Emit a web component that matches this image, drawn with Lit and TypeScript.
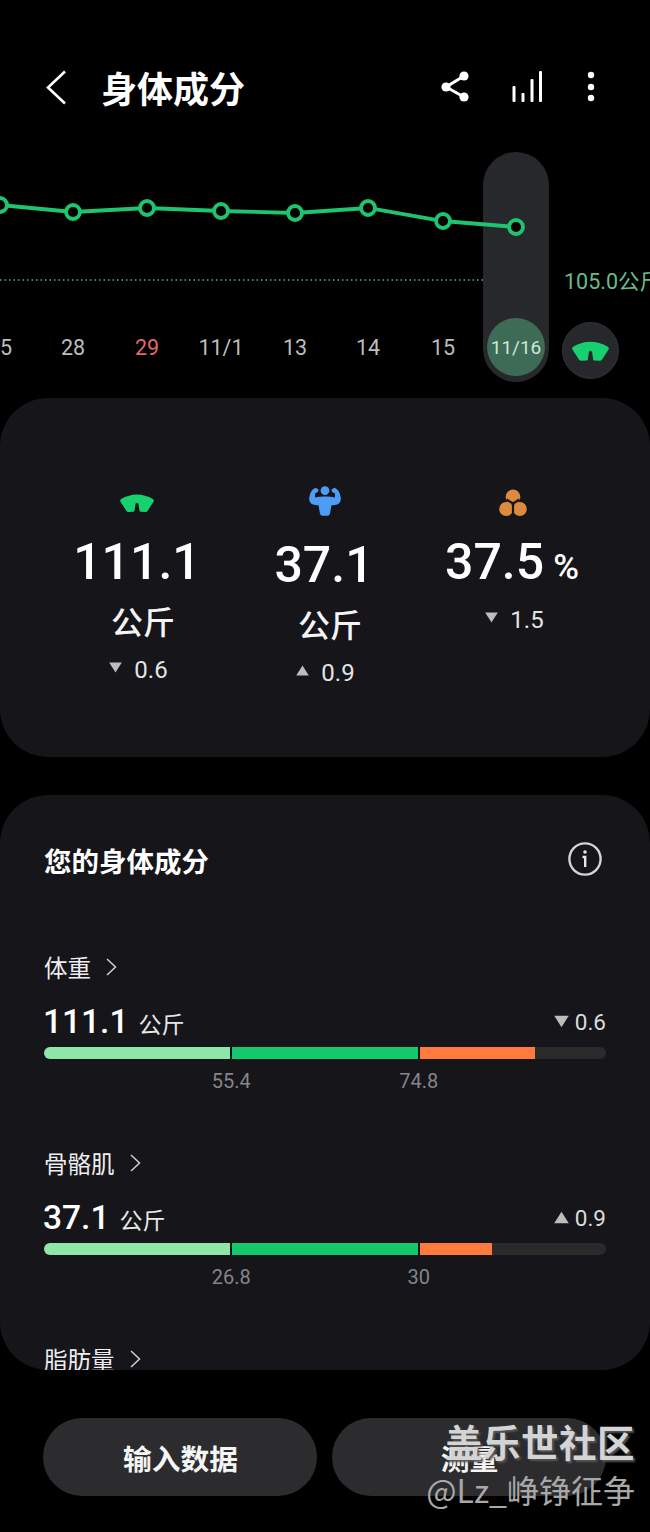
import { LitElement, html, css, svg } from "lit";
import { customElement } from "lit/decorators.js";

const POINTS: [number, number][] = [[0,205],[73,212],[147,208],[221,211],[295,213],[368,208],[443,221],[516,227]];
const DATES: {x:number;t:string;red?:boolean}[] = [
  {x:0,t:"25"},{x:73,t:"28"},{x:147,t:"29",red:true},{x:221,t:"11/1"},{x:295,t:"13"},{x:368,t:"14"},{x:443,t:"15"},
];

const fan = (w: number, h: number, c: string) => html`<svg width=${w} height=${h} viewBox="0 0 34 18"><path fill=${c} d="M1 5Q17 -4 33 5L34 7L27.5 17Q27 18 25.5 18L20.5 17.8Q19.5 17.6 19.4 16.5L18.4 9.5Q17 8.5 15.6 9.5L14.6 16.5Q14.5 17.6 13.5 17.8L8.5 18Q7 18 6.5 17L0 7Z"/></svg>`;
const tri = (up: boolean) => html`<svg class="tri" width="13" height="11" viewBox="0 0 13 11"><path fill="#bdbdc0" d=${up ? "M6.5 0.5L12.8 10.5H0.2Z" : "M0.2 0.5H12.8L6.5 10.5Z"}/></svg>`;
const chev = html`<svg class="chev" width="11" height="18" viewBox="0 0 11 18"><path d="M1 1L9.5 9L1 17" fill="none" stroke="#d0d0d0" stroke-width="1.5"/></svg>`;

@customElement("app-root")
export class AppRoot extends LitElement {
  static styles = css`
    :host { display: block; width: 650px; height: 1532px; background: #000; color: #fff; overflow: hidden; position: relative;
      font-family: Roboto, "Noto Sans CJK SC", sans-serif; }
    .header { height: 150px; box-sizing: border-box; padding: 70px 0 0 46px; display: flex; align-items: flex-start; }
    .back { display: block; }
    .title { margin: -3px 0 0 33px; font-size: 36px; line-height: 40px; font-weight: 700; font-family: "Noto Sans CJK SC", sans-serif; flex: 1; }
    .tools { display: block; margin: 0; position: absolute; left: 435px; top: 66px; }
    .chart { position: relative; height: 248px; overflow: hidden; }
    .pill { position: absolute; left: 483px; top: 2px; width: 66px; height: 230px; border-radius: 33px; background: #27282b; }
    .plot { position: absolute; left: 0; top: 0; }
    .date { position: absolute; top: 185px; width: 60px; margin-left: -30px; text-align: center; font-size: 21.5px; line-height: 26px; color: #bdbdbd; }
    .date.red { color: #e0686c; }
    .today { position: absolute; left: 487px; top: 168px; width: 58px; height: 58px; border-radius: 50%; background: #3e6b56;
      display: flex; align-items: center; justify-content: center; font-size: 19px; color: #cfe6d9; }
    .goal { position: absolute; left: 564px; top: 119px; font-size: 21.5px; line-height: 26px; color: #69bb88; white-space: nowrap; }
    .scale { position: absolute; left: 562px; top: 172px; width: 57px; height: 57px; box-sizing: border-box; border-radius: 50%;
      background: #27282b; border: 1px solid #333437; display: flex; align-items: center; justify-content: center; }
    .card { background: #15151a; border-radius: 48px; }
    .summary { height: 359px; box-sizing: border-box; padding: 90px 43px 0; display: grid; grid-template-columns: 188px 186px 188px; margin-bottom: 38px; }
    .col { display: flex; flex-direction: column; align-items: center; }
    .col.low .icon { margin-top: -2px; margin-left: 2px; }
    .col.low .num { margin-top: 20px; }
    .col.fat .icon { padding-left: 3px; }
    .icon { height: 30px; display: flex; align-items: center; justify-content: center; }
    .num { margin-top: 15px; font-size: 50px; line-height: 58px; font-weight: 500; white-space: nowrap; }
    .num small { font-size: 35px; margin-left: 9px; font-weight: 500; }
    .col.fat .num small { margin-right: -2px; }
    .unit { margin-top: 9px; font-size: 32px; line-height: 40px; font-weight: 500; font-family: "Noto Sans CJK SC", sans-serif; color: #f4f4f4; padding-left: 12px; }
    .delta { display: flex; align-items: center; gap: 12px; font-size: 24px; line-height: 30px; color: #e4e4e4; margin-top: 15px; padding-left: 3px; }
    .delta.pct { margin-top: 8px; padding-left: 7px; }
    .tri { display: block; margin-top: -5px; }
    .detail { height: 575px; box-sizing: border-box; overflow: hidden; padding: 46px 44px 0; margin-bottom: 48px; }
    .dhead { display: flex; justify-content: space-between; align-items: center; height: 38px; margin-bottom: 72px; }
    .dhead h2 { margin: 0; font-size: 27.5px; line-height: 38px; font-weight: 700; font-family: "Noto Sans CJK SC", sans-serif; }
    .info { display: block; margin: -2px 3px 0 0; }
    .metric { height: 196px; }
    .name { display: flex; align-items: center; gap: 15px; font-size: 23.5px; line-height: 32px; font-family: "Noto Sans CJK SC", sans-serif; color: #eee; }
    .chev { display: block; }
    .vals { display: flex; justify-content: space-between; align-items: center; height: 40px; margin-top: 19px; }
    .val { font-size: 33.5px; line-height: 40px; font-weight: 500; display: flex; align-items: baseline; gap: 10px; margin-left: -1px; }
    .val span { font-size: 23px; font-weight: 400; font-family: "Noto Sans CJK SC", sans-serif; color: #e8e8e8; }
    .chg { display: flex; align-items: center; gap: 6px; font-size: 22.5px; color: #dcdcdc; }
    .chg .tri { width: 15px; height: 13px; margin-top: -2px; }
    .bar { height: 12px; margin-top: 5px; border-radius: 6px; background: #2a2a2b; overflow: hidden; display: flex; }
    .seg { height: 100%; box-sizing: border-box; border-right: 2px solid #15151a; }
    .seg.last { border-right: none; }
    .a { background: #8ee6ab; }
    .b { background: #14c96b; }
    .c { background: #ff7a3c; }
    .marks { display: grid; grid-template-columns: 1fr 2fr 2fr 1fr; margin-top: 9px; font-size: 20px; line-height: 26px; color: #85858a; }
    .marks span { text-align: center; }
    .marks span:first-child { grid-column: 2; }
    .actions { display: flex; gap: 15px; padding: 0 44px 0 43px; }
    .btn { flex: 1; height: 78px; border-radius: 39px; background: #2c2c2f; display: flex; align-items: center; justify-content: center;
      font-size: 28.75px; font-weight: 700; font-family: "Noto Sans CJK SC", sans-serif; color: #f5f5f5; padding-left: 1px; }
    .mark { position: absolute; right: 15px; top: 1418px; display: flex; flex-direction: column; align-items: flex-end; font-family: "Noto Sans CJK SC", sans-serif; }
    .mark b { font-size: 37.5px; line-height: 46px; font-weight: 700; color: #d4d4d4; text-shadow: 2px 2px 2px #555; letter-spacing: 0.5px; }
    .mark i { font-style: normal; font-size: 32px; line-height: 40px; color: #a8a8a8; margin-top: 5px; white-space: nowrap; }
  `;

  private metric(name: string, v: string, up: boolean, d: string, w3: number, m1: string, m2: string) {
    return html`<div class="metric">
      <div class="name">${name}${chev}</div>
      <div class="vals">
        <div class="val">${v}<span>公斤</span></div>
        <div class="chg">${tri(up)}${d}</div>
      </div>
      <div class="bar">
        <div class="seg a" style="width:188px"></div>
        <div class="seg b" style="width:188px"></div>
        <div class="seg c last" style="width:${w3}px"></div>
      </div>
      <div class="marks"><span>${m1}</span><span>${m2}</span></div>
    </div>`;
  }

  render() {
    const pts = POINTS.map(p => `${p[0]},${p[1] - 150}`).join(" ");
    return html`
      <div class="header">
        <svg class="back" width="22" height="36" viewBox="0 0 22 36"><path d="M19 1.5L2 17.5L19 33.5" fill="none" stroke="#fff" stroke-width="2.6"/></svg>
        <div class="title">身体成分</div>
        <svg class="tools" width="170" height="40" viewBox="0 0 170 40" fill="#fff">
          <g stroke="#fff" stroke-width="3" fill="none"><path d="M29 10L11 21L29 31"/></g>
          <circle cx="29" cy="10" r="4.6"/><circle cx="11" cy="21" r="4.6"/><circle cx="29" cy="31" r="4.6"/>
          <rect x="77.5" y="20" width="3" height="16" rx="1"/><rect x="86.5" y="27" width="3" height="9" rx="1"/>
          <rect x="95.5" y="13" width="3" height="23" rx="1"/><rect x="104" y="5" width="3" height="31" rx="1"/>
          <circle cx="156" cy="9" r="3.2"/><circle cx="156" cy="21" r="3.2"/><circle cx="156" cy="32" r="3.2"/>
        </svg>
      </div>

      <div class="chart">
        <div class="pill"></div>
        <svg class="plot" width="650" height="248" viewBox="0 0 650 248">
          <line x1="0" y1="130" x2="483" y2="130" stroke="#5fae82" stroke-width="1.4" stroke-dasharray="1.5 3"/>
          <polyline points=${pts} fill="none" stroke="#1fc46f" stroke-width="3.8"/>
          ${POINTS.map(p => svg`<circle cx=${p[0]} cy=${p[1] - 150} r="7" fill="#000" stroke="#1fc46f" stroke-width="3.8"/>`)}
        </svg>
        ${DATES.map(d => html`<div class="date ${d.red ? "red" : ""}" style="left:${d.x}px">${d.t}</div>`)}
        <div class="today">11/16</div>
        <div class="goal">105.0公斤</div>
        <div class="scale">${fan(37, 20, "#17d06f")}</div>
      </div>

      <div class="card summary">
        <div class="col">
          <div class="icon">${fan(34, 18, "#17d06f")}</div>
          <div class="num">111.1</div>
          <div class="unit">公斤</div>
          <div class="delta">${tri(false)}0.6</div>
        </div>
        <div class="col low">
          <div class="icon"><svg width="32" height="30" viewBox="0 0 32 30" fill="#4d9cf8">
            <circle cx="16" cy="4.6" r="4.4"/>
            <path d="M6.5 1.8Q1 4 0.2 12Q0 17 4 18.6Q7 19.5 9.5 19.2L11 27.5Q11.4 29.8 13.5 29.8H18.5Q20.6 29.8 21 27.5L22.5 19.2Q25 19.5 28 18.6Q32 17 31.8 12Q31 4 25.5 1.8L22.8 3.2Q22 5.5 24 6.6L25.8 7.2Q26.3 9.4 25.8 11.6Q21 10.4 16 10.6Q11 10.4 6.2 11.6Q5.7 9.4 6.2 7.2L8 6.6Q10 5.5 9.2 3.2Z"/></svg></div>
          <div class="num">37.1</div>
          <div class="unit">公斤</div>
          <div class="delta">${tri(true)}0.9</div>
        </div>
        <div class="col fat">
          <div class="icon"><svg width="28" height="28" viewBox="0 0 28 28" fill="#dd8a3e">
            <circle cx="14" cy="8" r="7.4"/><circle cx="7.2" cy="20" r="7"/><circle cx="20.8" cy="20" r="7"/>
            <path d="M14 14.5V27.5M14 14.5L7.5 10.5M14 14.5L20.5 10.5" stroke="#15151a" stroke-width="2.2" fill="none"/></svg></div>
          <div class="num">37.5<small>%</small></div>
          <div class="delta pct">${tri(false)}1.5</div>
        </div>
      </div>

      <div class="card detail">
        <div class="dhead">
          <h2>您的身体成分</h2>
          <svg class="info" width="36" height="36" viewBox="0 0 36 36"><circle cx="18" cy="18" r="15.6" fill="none" stroke="#d4d4d4" stroke-width="2.4"/><circle cx="18" cy="11" r="1.8" fill="#e6e6e6"/><path d="M15.5 16H18.2V26" fill="none" stroke="#e6e6e6" stroke-width="2.4"/></svg>
        </div>
        ${this.metric("体重", "111.1", false, "0.6", 115, "55.4", "74.8")}
        ${this.metric("骨骼肌", "37.1", true, "0.9", 72, "26.8", "30")}
        <div class="metric"><div class="name">脂肪量${chev}</div></div>
      </div>

      <div class="actions">
        <div class="btn">输入数据</div>
        <div class="btn">测量</div>
      </div>

      <div class="mark"><b>盖乐世社区</b><i>@Lz_峥铮征争</i></div>
    `;
  }
}
